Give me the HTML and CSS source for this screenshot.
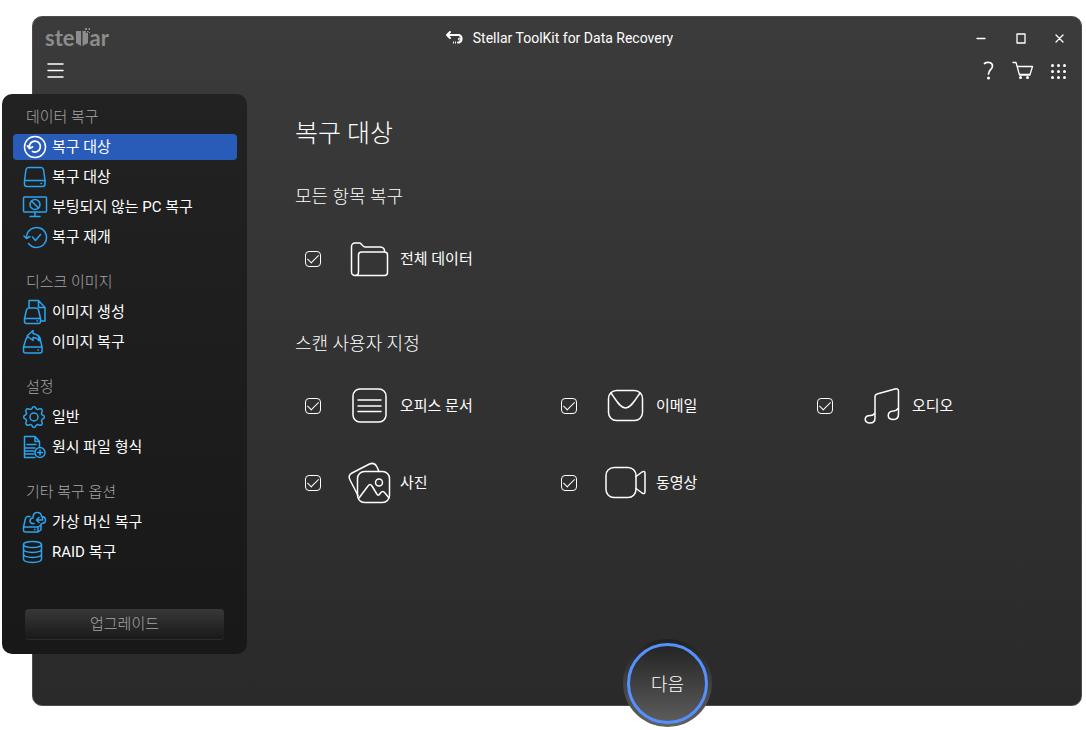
FILE: index.html
```html
<!DOCTYPE html>
<html lang="ko">
<head>
<meta charset="utf-8">
<title>Stellar ToolKit for Data Recovery</title>
<link rel="stylesheet" href="styles.css">
</head>
<body>
<div class="window">
  <header class="titlebar">
    <div class="logo" aria-label="stellar">
      <span>ste</span>
      <svg class="logo-bars" viewBox="0 0 15 20" aria-hidden="true"><path d="M1 3h5v15l-5-3z"/><path d="M7.500 18V3H11v2h2v10z"/><path d="M10 0h2v2h-2zM13.500 0h1.500v2h-1.500zM12 3h1.500v1.500H12zM14 4h1v1h-1z"/></svg>
      <span>ar</span>
    </div>
    <div class="app-title">
      <svg class="icon-back" viewBox="0 0 20 16" aria-hidden="true"><path d="M5 2 2 5l3 3M2.500 5H14a4 4 0 0 1 0 7.500h-1"/><path d="M8 12.500h4" stroke-dasharray="1 1" stroke-linecap="butt"/><circle cx="14.500" cy="9" r=".5"/></svg>
      <span>Stellar ToolKit for Data Recovery</span>
    </div>
    <div class="window-controls">
      <button type="button" aria-label="최소화"><svg viewBox="0 0 16 16"><path d="M4 8.500h8"/></svg></button>
      <button type="button" aria-label="최대화"><svg viewBox="0 0 16 16"><path d="M5 4h8v9H5z"/></svg></button>
      <button type="button" aria-label="닫기"><svg viewBox="0 0 16 16"><path d="m5 5 7 7M12 5l-7 7"/></svg></button>
    </div>
  </header>
  <div class="toolbar">
    <button type="button" aria-label="메뉴"><svg class="menu-icon" viewBox="0 0 24 22"><path d="M4 4h15M4 10.500h15M4 17h15"/></svg></button>
    <div class="tools">
      <button type="button" aria-label="도움말"><svg viewBox="0 0 24 22"><path class="thick" d="M8.500 3.500C11 1.500 16.500 2 16.500 6c0 3.500-4 4-4 8"/><circle class="dot" cx="12.500" cy="18" r="1.500"/></svg></button>
      <button type="button" aria-label="구매"><svg viewBox="0 0 24 22"><path d="M2 2.500h3L8.500 15H19M6 6.500h15.500L19 14.500H8.500"/><circle class="dot" cx="9.500" cy="17.500" r="1.500"/><circle class="dot" cx="16.500" cy="17.500" r="1.500"/></svg></button>
      <button type="button" aria-label="앱"><svg viewBox="0 0 24 22"><g class="dot"><circle cx="6.500" cy="5.500" r="1.500"/><circle cx="12.500" cy="5.500" r="1.500"/><circle cx="18.500" cy="5.500" r="1.500"/><circle cx="6.500" cy="11.500" r="1.500"/><circle cx="12.500" cy="11.500" r="1.500"/><circle cx="18.500" cy="11.500" r="1.500"/><circle cx="6.500" cy="17.500" r="1.500"/><circle cx="12.500" cy="17.500" r="1.500"/><circle cx="18.500" cy="17.500" r="1.500"/></g></svg></button>
    </div>
  </div>

  <main class="content">
    <h1>복구 대상</h1>
    <section>
      <h2>모든 항목 복구</h2>
      <div class="options">
        <label class="option"><input type="checkbox" checked>
          <svg viewBox="0 0 44 44"><path d="M7 38.500a3.500 3.500 0 0 1-3.500-3.500V9.500A3.500 3.500 0 0 1 7 6h4.500c2.500 0 2.500 4 5.500 4h15.500a4 4 0 0 1 4 4.500"/><path d="M7 38.500c2.500 0 3.500-1.500 3.500-4V18a3 3 0 0 1 3-3H36.500a3 3 0 0 1 3 3v17.500a3 3 0 0 1-3 3H7"/></svg>
          <span>전체 데이터</span></label>
      </div>
    </section>
    <section>
      <h2>스캔 사용자 지정</h2>
      <div class="options">
        <label class="option"><input type="checkbox" checked>
          <svg viewBox="0 0 44 44"><rect x="5" y="5" width="33" height="33" rx="7"/><path d="M10 16h23M10 22h23M10 27.500h23"/></svg>
          <span>오피스 문서</span></label>
        <label class="option"><input type="checkbox" checked>
          <svg viewBox="0 0 44 44"><rect x="4.500" y="6.500" width="34" height="30" rx="8"/><path d="M7 9c5 7 9 15 14.500 15S31 16 36 9"/></svg>
          <span>이메일</span></label>
        <label class="option"><input type="checkbox" checked>
          <svg viewBox="0 0 44 44"><path d="M15 34V12.500c0-1.500.5-2 2-2.500l18-5c2-.5 3.500 0 3.500 2v23c0 4-2 5.500-5 5.500-7 0-7-8 0-8.500 2 0 3-.5 4.500-2.500M15 29c-1.500 2-2.500 2.500-4.500 2.500-7 0-7 7.500-.5 7.500 3.500 0 5-2 5-5"/></svg>
          <span>오디오</span></label>
        <label class="option"><input type="checkbox" checked>
          <svg viewBox="0 0 44 44"><rect x="9.500" y="10.500" width="32" height="31" rx="7"/><circle cx="31" cy="21.500" r="3.500"/><path d="M11 37 20 25c1.500-2 2.500-2 4 0l4.500 7.500c1.500 2.500 2.500 2 4-.5 1.500-2 3-2 4.500 0l4 5M10 34.500 2 19c-1.500-3-1-5.500 2-7l17.500-9c3.500-1.500 6 0 7.500 3l2 4.500"/></svg>
          <span>사진</span></label>
        <label class="option"><input type="checkbox" checked>
          <svg viewBox="0 0 44 44"><rect x="2" y="6.500" width="30" height="30" rx="8"/><path d="m32 15.500 6-4.500c2-1 3-1 3 1.500v18c0 2.500-1 2.500-3 1.500l-6-4.500"/></svg>
          <span>동영상</span></label>
      </div>
    </section>
  </main>

  <nav class="sidebar">
    <section class="group">
      <h3>데이터 복구</h3>
      <a class="item active" href="#" aria-current="page"><svg viewBox="0 0 26 26"><circle cx="13" cy="13" r="10.500"/><path class="bold" d="M7.500 13.500a5.500 5.500 0 1 1 3 4M5.500 12l2 2.500 3-1.500"/></svg>복구 대상</a>
      <a class="item" href="#"><svg viewBox="0 0 26 26"><path d="M2.500 16.500 4 5.500c.5-1.500 1-2 2.500-2H19c1.500 0 2 .5 2.500 2l1.500 11V20a2.500 2.500 0 0 1-2.500 2.500H5A2.500 2.500 0 0 1 2.500 20z"/><path d="M3 16.500h20M19 19.500h.5"/></svg>복구 대상</a>
      <a class="item" href="#"><svg viewBox="0 0 26 26"><rect x="1.500" y="3" width="23" height="15" rx="1"/><circle cx="13" cy="10.500" r="5"/><path d="m9.500 7 7 7M13 18v4.500M8 22.500h10"/></svg>부팅되지 않는 PC 복구</a>
      <a class="item" href="#"><svg viewBox="0 0 26 26"><path d="M4.500 13a10 10 0 1 1 2 6.500M2 12l2.500 2.500 3.500-2M10.500 13l3 3.500 5-6"/></svg>복구 재개</a>
    </section>
    <section class="group">
      <h3>디스크 이미지</h3>
      <a class="item" href="#"><svg viewBox="0 0 26 26"><path d="M2.500 19.500 4.500 11c.5-1.500 1-2 2.500-2h7c1.500 0 2 .5 2.500 2l2 8.500v3a2 2 0 0 1-2 2h-12a2 2 0 0 1-2-2zM2.500 19.500h16M15 22h.5M7 9V1.500h9.500l6.500 7V22h-4.500M16.500 1.500v7H23"/></svg>이미지 생성</a>
      <a class="item" href="#"><svg viewBox="0 0 26 26"><path d="M5.500 8 4 10 1.500 18v4a2 2 0 0 0 2 2H18a2 2 0 0 0 2-2v-4L18 9c-.5-2-1-2.500-3-3M1.500 18H20M16 21h.5M5 7l6-5.500v3c5 .5 6.500 3.500 6 7.500-1.500-3-3-3.500-6-3.500v3z"/></svg>이미지 복구</a>
    </section>
    <section class="group">
      <h3>설정</h3>
      <a class="item" href="#"><svg viewBox="0 0 26 26"><circle cx="12" cy="13" r="4"/><path d="M10 4.500C10.500 2 13.500 2 14 4.500c1 1 2 1.500 3 .5 2-1 4 1 3 3-1 1-.5 2 .5 3 2.500.5 2.500 3.500 0 4-1 1-1.500 2-.5 3 1 2-1 4-3 3-1-1-2-.5-3 .5-.5 2.500-3.500 2.500-4 0-1-1-2-1.500-3-.5-2 1-4-1-3-3 1-1 .5-2-.5-3-2.500-.5-2.500-3.500 0-4 1-1 1.500-2 .5-3-1-2 1-4 3-3 1 1 2 .5 3-.5z"/></svg>일반</a>
      <a class="item" href="#"><svg viewBox="0 0 26 26"><path d="M13 23.500H2.500v-21H13l4.500 5V13M13 2.500v5h4.500M5 10.500h9M3 14h10M3 17h9M3 20h9"/><circle cx="18" cy="18.500" r="5"/><path d="M18 16v5M15.500 18.500h5"/></svg>원시 파일 형식</a>
    </section>
    <section class="group">
      <h3>기타 복구 옵션</h3>
      <a class="item" href="#"><svg viewBox="0 0 26 26"><path d="M8 7.500H5.500c-1 0-1.500.5-2 2L1.500 18v3a2 2 0 0 0 2 2H16l3-2v-6M1.500 18H16l3-2M16 18v5M12.500 20.500h.5M10 14.500c-3-1-2.500-5.500 1-5.500 0-3 1.500-5.500 4-5.500s4.500 1.500 4.500 4c5 0 5.500 6.500.5 7"/><path d="M10 14.500h2M20.500 8v3H15M17 8.500 14.500 11l2.500 2.500"/></svg>가상 머신 복구</a>
      <a class="item" href="#"><svg viewBox="0 0 26 26"><ellipse cx="10.500" cy="5.500" rx="9" ry="3"/><path d="M1.500 5.500V20c0 4.500 18 4.500 18 0V5.500M1.500 10c0 4.500 18 4.500 18 0M1.500 15c0 4.500 18 4.500 18 0"/></svg>RAID 복구</a>
    </section>
    <button type="button" class="upgrade">업그레이드</button>
  </nav>

  <button type="button" class="next"><span>다음</span></button>
</div>
</body>
</html>
```

FILE: styles.css
```css
* {
  box-sizing: border-box;
}

body {
  margin: 0;
  min-height: 100vh;
  padding: 16px 4px 24px 32px;
  display: flex;
  background: #fff;
  color: #fff;
  font: 15px/24px Roboto, "Noto Sans CJK KR", sans-serif;
}

h1, h2, h3 {
  margin: 0;
  font-weight: 300;
}

button {
  padding: 0;
  border: 0;
  background: none;
  color: inherit;
  font: inherit;
  cursor: pointer;
}

svg {
  display: block;
  flex: none;
  fill: none;
  stroke: currentColor;
  stroke-linecap: round;
  stroke-linejoin: round;
}

.window {
  position: relative;
  flex: 1;
  border: 1px solid #4c4c4c;
  border-radius: 10px;
  background: linear-gradient(#3b3b3b, #2a2a2a);
}

.titlebar {
  display: grid;
  grid-template-columns: 1fr auto 1fr;
  align-items: center;
  height: 41px;
  margin-bottom: 2px;
  padding: 0 8px 0 12px;
}

.logo {
  display: flex;
  align-items: center;
  color: #8c8c8c;
  font: 700 22px/24px Lato, sans-serif;
}

.logo-bars {
  width: 15px;
  height: 20px;
  fill: currentColor;
  stroke: none;
}

.app-title {
  display: flex;
  align-items: center;
  gap: 8px;
  font-size: 14px;
}

.icon-back {
  width: 20px;
  height: 16px;
  stroke-width: 2;
}

.window-controls {
  display: flex;
  justify-content: flex-end;
  gap: 11px;
}

.window-controls button {
  display: grid;
  place-items: center;
  width: 28px;
  height: 28px;
}

.window-controls svg {
  width: 16px;
  height: 16px;
  stroke-width: 1.3;
}

.toolbar {
  display: flex;
  justify-content: space-between;
  padding: 0 11px;
}

.toolbar svg {
  width: 24px;
  height: 22px;
  stroke-width: 1.3;
}

.toolbar .menu-icon {
  stroke-width: 1.5;
}

.toolbar .thick {
  stroke-width: 1.7;
}

.toolbar .dot {
  fill: currentColor;
  stroke: none;
}

.tools {
  display: flex;
  gap: 11px;
}

.content {
  padding: 34px 8px 120px 262px;
}

.content h1 {
  margin-bottom: 32px;
  font-size: 25px;
  line-height: 36px;
}

.content h2 {
  margin-bottom: 27px;
  font-size: 18px;
  line-height: 26px;
}

.content section + section {
  margin-top: 50px;
}

.options {
  display: grid;
  grid-template-columns: repeat(3, 1fr);
  row-gap: 33px;
  padding-left: 10px;
}

.option {
  display: flex;
  align-items: center;
}

.option svg {
  width: 44px;
  height: 44px;
  margin: 0 8px 0 27px;
  stroke-width: 1.5;
}

.option input {
  display: grid;
  justify-content: center;
  width: 16px;
  height: 16px;
  margin: 0;
  border: 1px solid #fff;
  border-radius: 4px;
  appearance: none;
}

.option input:checked::before {
  content: "";
  width: 5px;
  height: 10px;
  border: solid #fff;
  border-width: 0 1px 1px 0;
  transform: rotate(45deg);
}

.sidebar {
  position: absolute;
  top: 77px;
  bottom: 51px;
  left: -31px;
  width: 245px;
  display: flex;
  flex-direction: column;
  gap: 19px;
  padding: 10px 10px 14px 11px;
  border-radius: 10px;
  background: linear-gradient(#222, #181818);
}

.group {
  display: flex;
  flex-direction: column;
  gap: 4px;
}

.group h3 {
  padding-left: 13px;
  color: #a6a6a6;
  font-size: 15px;
  line-height: 26px;
}

.item {
  display: flex;
  align-items: center;
  gap: 4px;
  padding-left: 9px;
  border-radius: 4px;
  color: #fff;
  line-height: 26px;
  text-decoration: none;
}

.item svg {
  width: 26px;
  height: 26px;
  color: #2ba3ee;
  stroke-width: 1.5;
}

.item.active {
  background: #295cb9;
}

.item.active svg {
  color: #fff;
}

.item .bold {
  stroke-width: 1.8;
}

.upgrade {
  height: 31px;
  margin: auto 13px 0 12px;
  border-bottom: 1px solid #2c2c2c;
  border-radius: 4px;
  background: linear-gradient(#383838, #191919);
  color: #a6a6a6;
  font-weight: 300;
}

.next {
  position: absolute;
  bottom: -22px;
  left: 590px;
  width: 89px;
  height: 88px;
  padding: 4px;
  border-radius: 50%;
  background: linear-gradient(#202020, #626262);
  font-size: 18px;
  font-weight: 300;
}

.next span {
  display: grid;
  place-items: center;
  height: 81px;
  padding-top: 3px;
  border: 3px solid #5590ff;
  border-radius: 50%;
  background: linear-gradient(#242424, #5c5c5c);
}
```
